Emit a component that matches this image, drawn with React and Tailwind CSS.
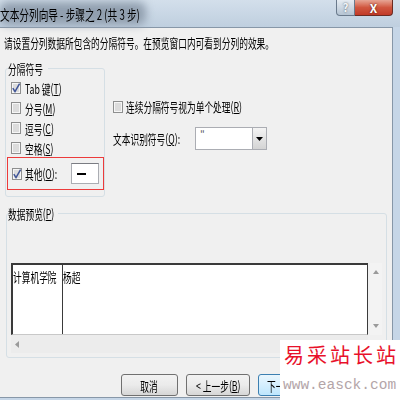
import React from 'react';

// scaled text: the dialog was captured narrow, glyphs are much narrower than tall
const T = ({ children, className = '' }) => (
  <span className={`inline-block origin-left scale-x-[0.67] whitespace-nowrap ${className}`}>{children}</span>
);

const Check = ({ checked }) => (
  <svg width="10" height="12" viewBox="0 0 10 12" className="shrink-0">
    <rect x="0.5" y="0.5" width="9" height="11" fill="#f6f6f6" stroke="#8e8f8f" />
    <rect x="2" y="2" width="6" height="8" fill="#dcdcdc" />
    {checked && <path d="M1.8 6.2 L4 9.6 L8.6 1.6" stroke="#3f5497" strokeWidth="1.5" fill="none" />}
  </svg>
);

const Btn = ({ children, w, primary }) => (
  <div
    className={`h-[22px] ${w} rounded-[3px] border flex items-center justify-center ${
      primary
        ? 'border-[#3c7fb1] bg-gradient-to-b from-[#eaf6fd] to-[#bee6fd]'
        : 'border-[#707070] bg-gradient-to-b from-[#f2f2f2] via-[#ebebeb] to-[#d6d6d6]'
    }`}
  >
    <span className="inline-block scale-x-[0.67] whitespace-nowrap">{children}</span>
  </div>
);

const Row = ({ checked, children }) => (
  <div className="h-[20px] flex items-center pl-[5px] gap-[4px]">
    <Check checked={checked} />
    <T>{children}</T>
  </div>
);

export default function App() {
  return (
    <div className="w-[400px] h-[400px] relative overflow-hidden flex flex-col bg-[#c6d6e7] text-black text-[13px] leading-[13px] [font-family:'Noto_Sans_CJK_SC','Noto_Sans',sans-serif]">
      {/* title bar */}
      <div className="h-[27px] shrink-0 flex items-start justify-between pr-[7px] bg-gradient-to-b from-[#d3dfeb] to-[#bfcfdf]">
        <div className="grid h-[27px] items-center">
          <div className="col-start-1 row-start-1 w-[146px] h-[23px] rounded-[8px] bg-[#919faf] blur-[4px]" />
          <div className="col-start-1 row-start-1">
            <span className="inline-block origin-left scale-x-[0.69] whitespace-nowrap text-[14px] leading-[14px]">文本分列向导 - 步骤之 2 (共 3 步)</span>
          </div>
        </div>
        <div className="flex h-[16px]">
          <div className="w-[19px] h-[16px] rounded-bl-[4px] border border-t-0 border-[#6a7a8c] bg-gradient-to-b from-[#e6ecf2] to-[#b5c4d3] flex items-center justify-center text-[11px] font-bold text-[#f4f6f8] [text-shadow:0_0_2px_#44505c]">
            ?
          </div>
          <div className="w-[38px] h-[16px] rounded-br-[4px] border border-t-0 border-l-0 border-[#6b2b22] bg-gradient-to-b from-[#e6a595] via-[#d0563f] to-[#c13a28] flex items-center justify-center text-[12px] font-bold text-white [text-shadow:0_0_2px_#4a150f]">
            X
          </div>
        </div>
      </div>

      {/* dialog body */}
      <div className="flex-1 mr-[7px] mb-[2px] bg-[#f0f0f0] border-t border-r border-b border-[#8797a8] flex flex-col pl-[5px]">
        <div className="mt-[8px] -ml-[1px]">
          <T>请设置分列数据所包含的分隔符号。在预览窗口内可看到分列的效果。</T>
        </div>

        <div className="mt-[13px] flex">
          <fieldset className="w-[100px] border border-[#d5dfe5] rounded-[3px] pt-[3px] pb-[6px]">
            <legend className="ml-[2px] w-[40px]">
              <T>分隔符号</T>
            </legend>
            <Row checked>Tab 键(<u>T</u>)</Row>
            <Row>分号(<u>M</u>)</Row>
            <Row>逗号(<u>C</u>)</Row>
            <Row>空格(<u>S</u>)</Row>
            <div className="-mt-[1px] ml-[1px] h-[33px] border border-[#ec3b3b] flex items-center pl-[4px]">
              <Check checked />
              <div className="w-[46px] ml-[3px]">
                <T>其他(<u>O</u>):</T>
              </div>
              <div className="w-[28px] h-[21px] bg-white border border-[#abadb3] border-t-[#7a7c82] flex items-center pl-[5px]">
                <div className="w-[9px] h-[2px] bg-black" />
              </div>
            </div>
          </fieldset>

          <div className="ml-[8px] pt-[38px]">
            <div className="h-[13px] flex items-center gap-[3px]">
              <Check />
              <T>连续分隔符号视为单个处理(<u>R</u>)</T>
            </div>
            <div className="mt-[14px] h-[23px] flex items-center">
              <div className="w-[82px]">
                <T>文本识别符号(<u>Q</u>):</T>
              </div>
              <div className="w-[72px] h-[23px] flex bg-white border border-[#abadb3]">
                <div className="flex-1 pl-[4px] pt-[1px] text-[10px] leading-[10px] text-[#555]">"</div>
                <div className="w-[14px] border-l border-[#abadb3] bg-gradient-to-b from-[#f4f4f4] to-[#d4d4d4] flex items-center justify-center">
                  <svg width="7" height="4" viewBox="0 0 7 4">
                    <path d="M0 0 H7 L3.5 4 Z" fill="#000" />
                  </svg>
                </div>
              </div>
            </div>
          </div>
        </div>

        <fieldset className="mt-[10px] ml-[1px] w-[381px] border border-[#d5dfe5] rounded-[3px] pb-[4px]">
          <legend className="ml-[1px] w-[50px]">
            <T>数据预览(<u>P</u>)</T>
          </legend>
          <div className="mt-[43px] ml-[4px] flex">
            <div className="w-[357px] h-[72px] bg-white border-t-2 border-l-2 border-r border-b border-[#3a3a3a] border-b-[#c8c8c8] flex">
              <div className="w-[50px] border-r border-[#3a3a3a] pt-[5px]">
                <T>计算机学院</T>
              </div>
              <div className="flex-1 pt-[5px]">
                <T>杨超</T>
              </div>
            </div>
            <div className="ml-[2px] w-[12px] h-[72px] bg-[#f3f3f3] flex flex-col items-center justify-between py-[7px]">
              <svg width="6" height="4" viewBox="0 0 6 4">
                <path d="M3 0 L6 4 H0 Z" fill="#9a9a9a" />
              </svg>
              <svg width="6" height="4" viewBox="0 0 6 4">
                <path d="M0 0 H6 L3 4 Z" fill="#9a9a9a" />
              </svg>
            </div>
          </div>
          <div className="h-[18px] ml-[4px] w-[357px] bg-[#ececec] flex items-center pl-[4px]">
            <svg width="4" height="7" viewBox="0 0 4 7">
              <path d="M4 0 V7 L0 3.5 Z" fill="#9a9a9a" />
            </svg>
          </div>
        </fieldset>

        <div className="mt-[16px] flex justify-end gap-[8px] pr-[70px]">
          <Btn w="w-[57px]">取消</Btn>
          <Btn w="w-[64px]">&lt; 上一步(<u>B</u>)</Btn>
          <Btn w="w-[64px]" primary>下一步(<u>N</u>) &gt;</Btn>
        </div>
      </div>

      {/* watermark */}
      <div className="absolute right-0 bottom-0 w-[120px] h-[60px] bg-white pl-[4px] pt-[4px]">
        <div className="text-[20px] leading-[22px] tracking-[3px] text-[#e8102a] whitespace-nowrap">易采站长站</div>
        <div className="mt-[12px] -ml-[1px] text-[14.5px] leading-[14px] text-[#b3a5a8] whitespace-nowrap [font-family:'Liberation_Mono',monospace]">
          www.easck.com
        </div>
      </div>
    </div>
  );
}
